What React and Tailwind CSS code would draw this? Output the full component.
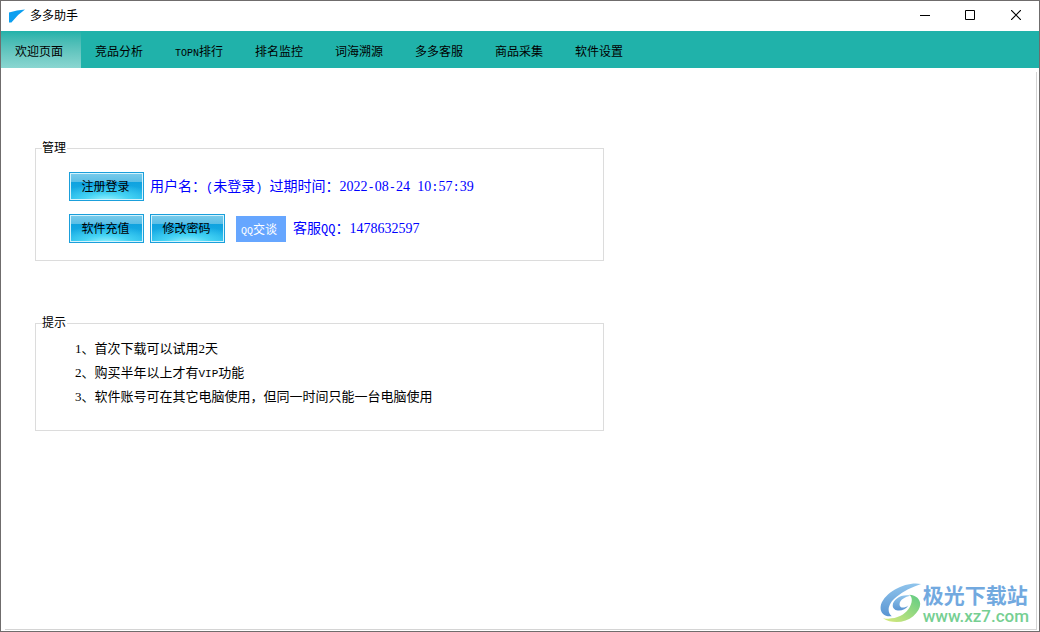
import React, { useState } from "react";

const tabs = ["欢迎页面", "竞品分析", "TOPN排行", "排名监控", "词海溯源", "多多客服", "商品采集", "软件设置"];

const tips = [
    "1、首次下载可以试用2天",
    "2、购买半年以上才有VIP功能",
    "3、软件账号可在其它电脑使用，但同一时间只能一台电脑使用",
];

// Latin letters and digits are half as wide as a Chinese character
const Mixed = ({ text, size }) =>
    text.split(/(\d+|[^\d\u0080-\uffff]+)/).map((part, index) => {
        if (index % 2 === 0) return part;
        return /\d/.test(part) ? (
            <span key={index} className="font-['Liberation_Serif',serif] leading-none">{part}</span>
        ) : (
            <span key={index} className={`font-['Liberation_Mono',monospace] leading-none ${size}`}>{part}</span>
        );
    });

const GlossyButton = ({ children }) => (
    <button
        type="button"
        className="h-[29px] w-[75px] border border-[#1a9fdb] bg-[radial-gradient(ellipse_70%_60%_at_50%_100%,#9cf4ff_0%,#45d3f4_45%,transparent_100%),linear-gradient(#7ecdec_0%,#5cbfe6_33%,#0fa2df_34%,#1fb4e8_100%)] bg-origin-border pr-0.5 pb-0.5 text-xs leading-none whitespace-nowrap text-black shadow-[inset_0_0_0_1px_#d4f3fd]"
    >
        {children}
    </button>
);

const GroupBox = ({ title, className, children }) => (
    <fieldset className={`w-full max-w-[569px] border border-[#dcdcdc] pl-[33px] ${className}`}>
        <legend className="-ml-[27px] pr-px pb-0.5 text-xs leading-4">{title}</legend>
        {children}
    </fieldset>
);

const TitleBar = () => (
    <header className="flex h-[30px] items-center bg-white">
        <svg className="ml-2 h-[14px] w-4" viewBox="0 0 16 14" aria-hidden="true">
            <path d="M0 3.4 Q8 1.2 16 .6 Q8 6 2.4 13.4 L0 13.4 Z" fill="#0c9ff0" />
        </svg>
        <h1 className="ml-[5px] flex-1 pb-0.5 text-xs">多多助手</h1>
        <div className="flex h-full pb-0.5">
            <button type="button" aria-label="最小化" className="grid w-[45px] place-items-center">
                <svg width="10" height="10" viewBox="0 0 10 10" stroke="#000"><path d="M0 5.5H10" /></svg>
            </button>
            <button type="button" aria-label="最大化" className="grid w-[46px] place-items-center">
                <svg width="10" height="10" viewBox="0 0 10 10" fill="none" stroke="#000"><path d="M.5 .5H9.5V9.5H.5Z" /></svg>
            </button>
            <button type="button" aria-label="关闭" className="grid w-[46px] place-items-center">
                <svg width="10" height="10" viewBox="0 0 10 10" stroke="#000" strokeWidth="1.2"><path d="M0 0L10 10M10 0L0 10" /></svg>
            </button>
        </div>
    </header>
);

const Watermark = () => (
    <div className="absolute right-[10px] bottom-[7px] flex items-center">
        <svg className="h-[41px] w-[43px]" viewBox="0 0 44 42" aria-hidden="true">
            <defs>
                <linearGradient id="swoosh" x1="0" y1="0" x2="0" y2="1">
                    <stop offset="0" stopColor="#8fc4ec" />
                    <stop offset="1" stopColor="#5a95d2" />
                </linearGradient>
                <linearGradient id="leaf" x1="0" y1="1" x2="1" y2="0">
                    <stop offset="0" stopColor="#dcea7c" />
                    <stop offset="1" stopColor="#5ecb84" />
                </linearGradient>
            </defs>
            <path d="M42 1C28-2 6 8 1 22C-1 30 4 35 12 34C6 29 9 20 17 14C24 8 33 4 42 1Z" fill="url(#swoosh)" />
            <path d="M30 12C43 13 45 25 34 34C26 41 12 42 3 36C14 38 24 34 29 27C33 21 34 15 30 12Z" fill="url(#leaf)" />
            <path d="M31 13C22 11 13 17 13 23C13 30 25 30 29 23C25 26 20 26 20 22C20 17 26 14 31 13Z" fill="url(#swoosh)" />
        </svg>
        <div className="flex flex-col">
            <span className="text-[21px] leading-5 font-bold text-[#72a9df]">极光下载站</span>
            <span className="mt-1 font-[Roboto,sans-serif] text-[17px] leading-4 font-medium text-[#76cf92]">www.xz7.com</span>
        </div>
    </div>
);

const App = () => {
    const [active, setActive] = useState(0);

    return (
        <div className="relative flex min-h-screen flex-col border border-[#6f6c6c] bg-white font-['Noto_Sans_CJK_SC',sans-serif] text-black">
            <TitleBar />
            <nav className="flex h-[37px] bg-[#20b2aa]">
                {tabs.map((tab, index) => (
                    <button
                        key={tab}
                        type="button"
                        onClick={() => setActive(index)}
                        className={`w-20 pt-0.5 pr-1 text-xs whitespace-nowrap ${index === active ? "bg-linear-to-b from-[#20b2aa] to-[#8ad6d1]" : ""}`}
                    >
                        <Mixed text={tab} size="text-[10px]" />
                    </button>
                ))}
            </nav>
            <div className="flex flex-1 bg-white pt-1 pr-0.5 pb-px pl-1">
                <main className="flex-1 border-r border-b border-[#d4d4d4] pt-[67px] pl-[30px]">
                    <GroupBox title="管理" className="pb-[17px]">
                        <div className="mt-[15px] flex items-center gap-1.5">
                            <GlossyButton>注册登录</GlossyButton>
                            <p className="pb-1 text-sm whitespace-nowrap text-[#0000ff]">
                                <Mixed text="用户名：(未登录) 过期时间：2022-08-24 10:57:39" size="text-[12px]" />
                            </p>
                        </div>
                        <div className="mt-[13px] flex items-center gap-1.5">
                            <GlossyButton>软件充值</GlossyButton>
                            <GlossyButton>修改密码</GlossyButton>
                            <button type="button" className="ml-[5px] h-[26px] w-[50px] bg-[#66a6ff] pr-1 text-xs whitespace-nowrap text-white">
                                <Mixed text="QQ交谈" size="text-[10px]" />
                            </button>
                            <p className="pb-1 pl-px text-sm whitespace-nowrap text-[#0000ff]">
                                <Mixed text="客服QQ：1478632597" size="text-[12px]" />
                            </p>
                        </div>
                    </GroupBox>
                    <GroupBox title="提示" className="mt-[53px] pb-[22px]">
                        <ul className="mt-1 pl-1.5 text-[13px] leading-6">
                            {tips.map((tip) => (
                                <li key={tip} className="whitespace-nowrap">
                                    <Mixed text={tip} size="text-[11px]" />
                                </li>
                            ))}
                        </ul>
                    </GroupBox>
                </main>
            </div>
            <Watermark />
        </div>
    );
};

export default App;
